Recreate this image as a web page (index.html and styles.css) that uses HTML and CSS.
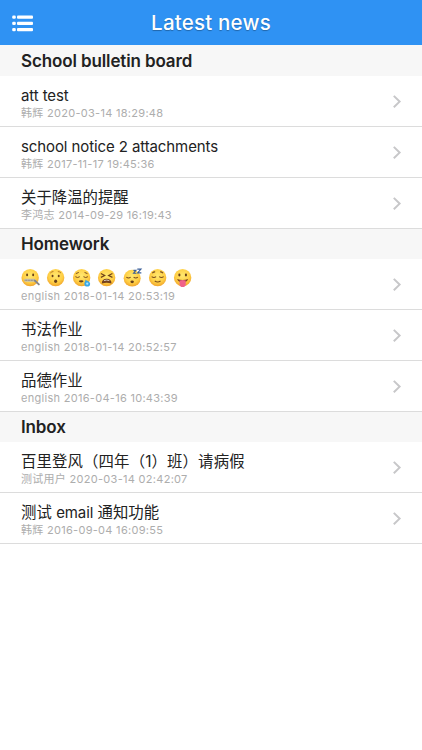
FILE: index.html
```html
<!DOCTYPE html>
<html lang="en">
<head>
<meta charset="utf-8">
<title>Latest news</title>
<link rel="stylesheet" href="styles.css">
</head>
<body>
<svg class="defs" width="0" height="0" aria-hidden="true">
  <defs>
    <radialGradient id="skin" cx="50%" cy="38%" r="62%">
      <stop offset="0" stop-color="#ffe870"/><stop offset=".65" stop-color="#ffcf45"/><stop offset="1" stop-color="#f0a42c"/>
    </radialGradient>
    <symbol id="chevron" viewBox="0 0 10 14"><path d="M1.8 .9 7.6 6.6 1.8 12.3" fill="none" stroke="#c7c7c9" stroke-width="2"/></symbol>
  </defs>
</svg>
<header class="bar">
  <svg class="menu" viewBox="0 0 21 17" fill="#fff">
    <rect x=".2" y=".6" width="3.6" height="3.2" rx="1.3"/><rect x="5" y=".6" width="16" height="3.2" rx="1"/>
    <rect x=".2" y="6.8" width="3.6" height="3.2" rx="1.3"/><rect x="5" y="6.8" width="16" height="3.2" rx="1"/>
    <rect x=".2" y="13" width="3.6" height="3.2" rx="1.3"/><rect x="5" y="13" width="16" height="3.2" rx="1"/>
  </svg>
  <h1>Latest news</h1>
</header>
<main>
  <h2 class="first">School bulletin board</h2>
  <ul>
    <li><div><h3 class="latin">att test</h3><p>韩辉 2020-03-14 18:29:48</p></div><svg class="chev"><use href="#chevron"/></svg></li>
    <li><div><h3 class="latin">school notice 2 attachments</h3><p>韩辉 2017-11-17 19:45:36</p></div><svg class="chev"><use href="#chevron"/></svg></li>
    <li><div><h3>关于降温的提醒</h3><p>李鸿志 2014-09-29 16:19:43</p></div><svg class="chev"><use href="#chevron"/></svg></li>
  </ul>
  <h2>Homework</h2>
  <ul>
    <li><div><h3 class="faces">
      <svg viewBox="0 0 20 20"><circle cx="9.5" cy="10" r="9" fill="url(#skin)"/><ellipse cx="6.3" cy="7.2" rx="1" ry="1.4" fill="#68401b"/><ellipse cx="12.6" cy="7.2" rx="1" ry="1.4" fill="#68401b"/><rect x="3.4" y="11.2" width="11.6" height="3" rx="1.2" fill="#c9c3b0"/><path d="M3.8 12.7H15" stroke="#77756d" stroke-width=".9" stroke-dasharray="1 .6"/><path d="m14.5 13.2 4 3.8" stroke="#84868b" stroke-width="2" stroke-linecap="round"/></svg>
      <svg viewBox="0 0 20 20"><circle cx="10" cy="10" r="9" fill="url(#skin)"/><ellipse cx="6.8" cy="8.2" rx="1" ry="1.3" fill="#68401b"/><ellipse cx="13.2" cy="8.2" rx="1" ry="1.3" fill="#68401b"/><path d="M4.5 5.2q1.5-1.6 3.2-1.5M15.5 5.2q-1.5-1.6-3.2-1.5" fill="none" stroke="#a96b20" stroke-width=".9"/><ellipse cx="10" cy="13.8" rx="1.6" ry="1.8" fill="#68401b"/></svg>
      <svg viewBox="0 0 20 20"><circle cx="10" cy="10" r="9" fill="url(#skin)"/><path d="M3.5 9q2.3 1.8 4.6 0M11.9 9q2.3 1.8 4.6 0M4 5.8l3-1.2M16 5.8l-3-1.2" fill="none" stroke="#794b1d" stroke-width="1"/><ellipse cx="9.5" cy="13.8" rx="2.4" ry="1.1" fill="#68401b"/><path d="M14 11.8c1 1.4 4.8 2 4.8 4.5a3 3 0 0 1-6 0c0-2 1.2-2.5 1.2-4.5Z" fill="#3aa7e5"/><circle cx="15.8" cy="16.2" r="1.2" fill="#a7e5ff"/></svg>
      <svg viewBox="0 0 20 20"><circle cx="10" cy="10" r="9" fill="url(#skin)"/><path d="m4 5.6 4 2.2-4 1.9M16 5.6l-4 2.2 4 1.9" fill="none" stroke="#70431b" stroke-width="1.2"/><path d="M5 16q0-4.8 5-4.8t5 4.8q-5-1.6-10 0Z" fill="#74401d"/><path d="M7.2 13.1q2.8-1.2 5.6 0" fill="none" stroke="#eee" stroke-width=".8"/></svg>
      <svg viewBox="0 0 20 20"><circle cx="9.5" cy="10.5" r="8.8" fill="url(#skin)"/><path d="M3.5 9.4q2.2 1.8 4.4 0M11 9.4q2.2 1.8 4.4 0" fill="none" stroke="#794b1d" stroke-width="1.1"/><ellipse cx="9.5" cy="14.3" rx="1.8" ry="1.4" fill="#68401b"/><path d="M10.8 2.4h2.6l-2.4 3h2.7M14.8 1.2h3.8l-3.4 3.9h3.8" fill="none" stroke="#3b5f99" stroke-width="1.2"/></svg>
      <svg viewBox="0 0 20 20"><circle cx="10" cy="10" r="9" fill="url(#skin)"/><path d="M3.8 9q2.3 1.8 4.6 0M11.6 9q2.3 1.8 4.6 0M4.4 5.2q1.4-1.3 3-1.2M15.6 5.2q-1.4-1.3-3-1.2M7 13.5q3 2 6 0" fill="none" stroke="#794b1d" stroke-width="1.1"/></svg>
      <svg viewBox="0 0 20 20"><circle cx="10" cy="10" r="9" fill="url(#skin)"/><ellipse cx="6.6" cy="7.2" rx="1.1" ry="1.5" fill="#68401b"/><ellipse cx="13.4" cy="7.2" rx="1.1" ry="1.5" fill="#68401b"/><path d="M4.3 11.4q5.7 2 11.4 0-1 3.6-5.7 3.6t-5.7-3.6Z" fill="#7a4520"/><path d="M6.8 13q3.2-1 6.4 0v3.6a3.2 3.2 0 0 1-6.4 0Z" fill="#f0628a"/></svg>
    </h3><p>english 2018-01-14 20:53:19</p></div><svg class="chev"><use href="#chevron"/></svg></li>
    <li><div><h3>书法作业</h3><p>english 2018-01-14 20:52:57</p></div><svg class="chev"><use href="#chevron"/></svg></li>
    <li><div><h3>品德作业</h3><p>english 2016-04-16 10:43:39</p></div><svg class="chev"><use href="#chevron"/></svg></li>
  </ul>
  <h2>Inbox</h2>
  <ul>
    <li><div><h3 class="wide">百里登风（四年（1）班）请病假</h3><p>测试用户 2020-03-14 02:42:07</p></div><svg class="chev"><use href="#chevron"/></svg></li>
    <li><div><h3>测试 <span class="latin">email</span> 通知功能</h3><p>韩辉 2016-09-04 16:09:55</p></div><svg class="chev"><use href="#chevron"/></svg></li>
  </ul>
</main>
</body>
</html>
```
FILE: styles.css
```css
* { box-sizing: border-box; margin: 0; padding: 0; }
body { background: #fff; color: #222; font-family: Inter, "Noto Sans CJK SC", sans-serif; }
.defs { position: absolute; }
.bar { height: 45px; background: #2f92f3; display: grid; grid-template-columns: 33px 1fr 33px; align-items: center; }
.menu { width: 21px; height: 17px; margin-left: 12px; }
h1 { text-align: center; color: #fff; font-size: 20.5px; font-weight: 500; line-height: 46px; letter-spacing: .2px; text-shadow: 0 1px 1px rgba(0, 0, 0, .3); }
h2 { height: 30px; padding-left: 21px; background: #f7f7f7; font-size: 17px; font-weight: 600; line-height: 31px; letter-spacing: -.12px; }
h2.first { height: 31px; line-height: 32px; }
ul { list-style: none; }
li { height: 51px; padding: 10px 20px 0 21px; border-bottom: 1px solid #dcdcdc; display: flex; justify-content: space-between; }
h3 { height: 19px; font-size: 15.4px; font-weight: 400; line-height: 19px; white-space: nowrap; }
.latin { font-size: 15px; letter-spacing: -.1px; }
.wide { letter-spacing: .13px; }
p { height: 15px; margin-top: 1px; color: #adadad; font-size: 11px; line-height: 15px; letter-spacing: .29px; white-space: nowrap; }
.chev { width: 10px; height: 14px; margin-top: 9px; }
.faces { display: flex; gap: 6.1px; }
.faces svg { width: 19.3px; height: 19.3px; margin-top: -1px; overflow: visible; }
```
